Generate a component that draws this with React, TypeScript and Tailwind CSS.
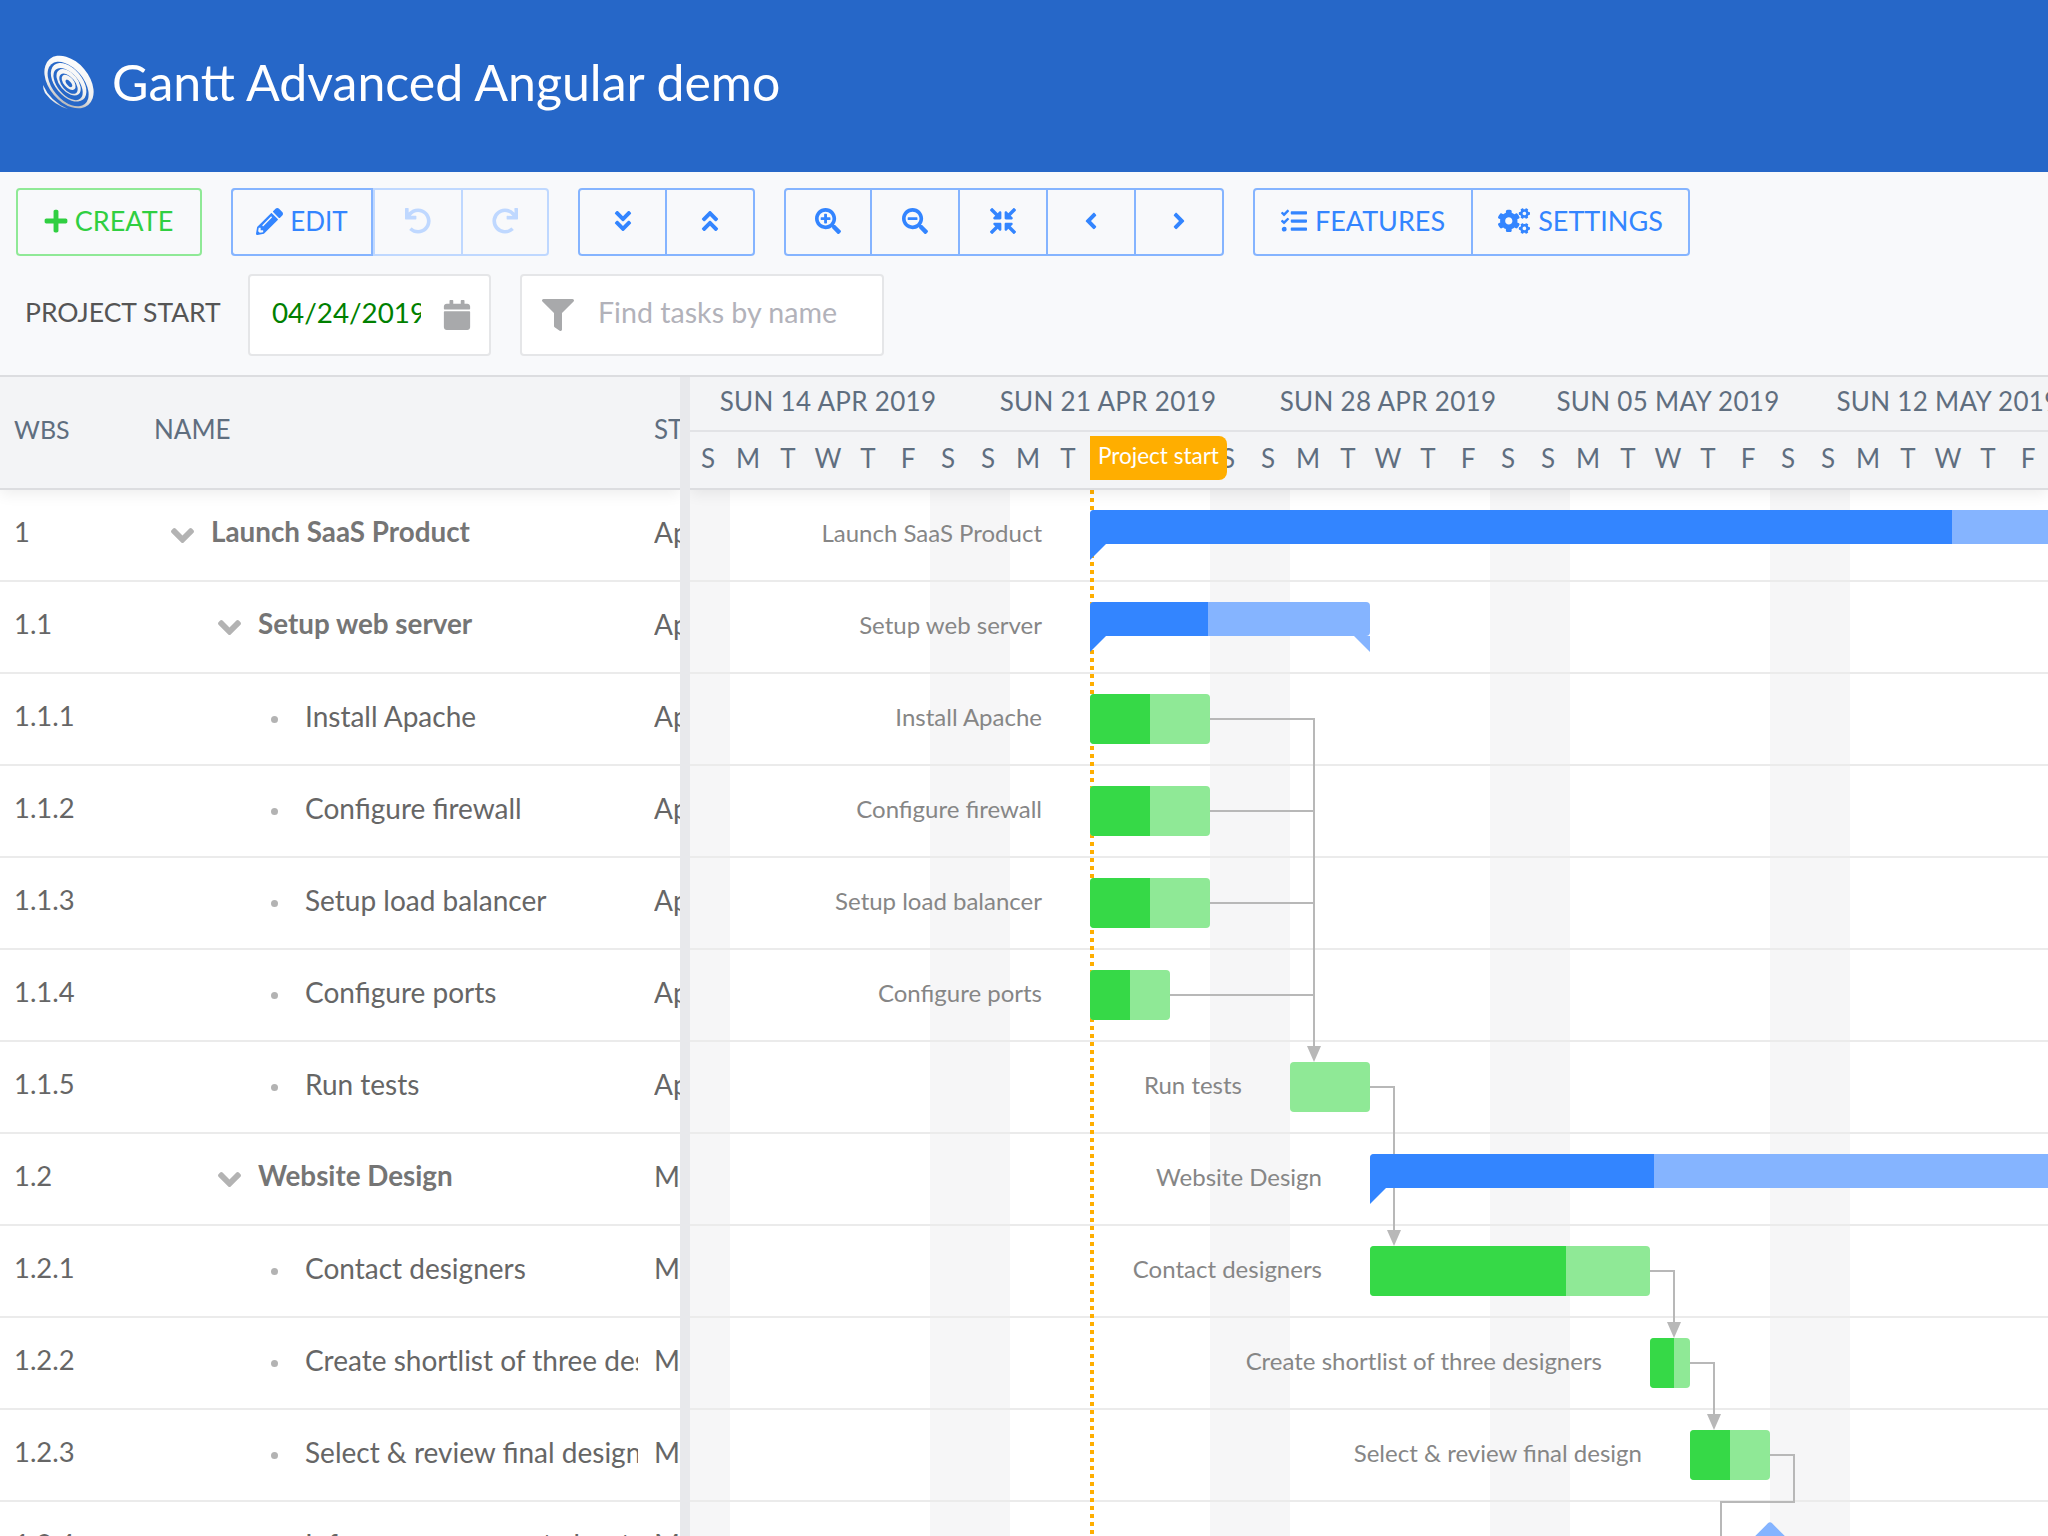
import React from "react";
import {
  FaPlus,
  FaPencilAlt,
  FaUndo,
  FaRedo,
  FaAngleDoubleDown,
  FaAngleDoubleUp,
  FaSearchPlus,
  FaSearchMinus,
  FaCompressArrowsAlt,
  FaAngleLeft,
  FaAngleRight,
  FaTasks,
  FaCogs,
  FaCalendar,
  FaFilter,
  FaAngleDown,
} from "react-icons/fa";

const TIMELINE_LEFT = 690;

const weeks = [
  "SUN 14 APR 2019",
  "SUN 21 APR 2019",
  "SUN 28 APR 2019",
  "SUN 05 MAY 2019",
  "SUN 12 MAY 2019",
];

const days = "SMTWTFSSMTWTFSSMTWTFSSMTWTFSSMTWTFSSMTWTF".split("");

const weekendBands = [690, 930, 1210, 1490, 1770];

type Task = {
  wbs: string;
  name: string;
  level: number;
  parent?: boolean;
  start: string;
  from?: number;
  to?: number;
  done?: number;
};

const tasks: Task[] = [
  { wbs: "1", name: "Launch SaaS Product", level: 0, parent: true, start: "Apr 24, 2019", from: 1090, to: 2100, done: 1952 },
  { wbs: "1.1", name: "Setup web server", level: 1, parent: true, start: "Apr 24, 2019", from: 1090, to: 1370, done: 1208 },
  { wbs: "1.1.1", name: "Install Apache", level: 2, start: "Apr 24, 2019", from: 1090, to: 1210, done: 1150 },
  { wbs: "1.1.2", name: "Configure firewall", level: 2, start: "Apr 24, 2019", from: 1090, to: 1210, done: 1150 },
  { wbs: "1.1.3", name: "Setup load balancer", level: 2, start: "Apr 24, 2019", from: 1090, to: 1210, done: 1150 },
  { wbs: "1.1.4", name: "Configure ports", level: 2, start: "Apr 24, 2019", from: 1090, to: 1170, done: 1130 },
  { wbs: "1.1.5", name: "Run tests", level: 2, start: "Apr 29, 2019", from: 1290, to: 1370, done: 1290 },
  { wbs: "1.2", name: "Website Design", level: 1, parent: true, start: "May 01, 2019", from: 1370, to: 2100, done: 1654 },
  { wbs: "1.2.1", name: "Contact designers", level: 2, start: "May 01, 2019", from: 1370, to: 1650, done: 1566 },
  { wbs: "1.2.2", name: "Create shortlist of three designers", level: 2, start: "May 08, 2019", from: 1650, to: 1690, done: 1674 },
  { wbs: "1.2.3", name: "Select & review final design", level: 2, start: "May 09, 2019", from: 1690, to: 1770, done: 1730 },
  { wbs: "1.2.4", name: "Inform management about decision", level: 2, start: "May 11, 2019" },
];

// dependency lines, relative to the timeline body
const depLines = [
  { d: "M520 229H624V556", arrow: [624, 572] },
  { d: "M520 321H624" },
  { d: "M520 413H624" },
  { d: "M480 505H624" },
  { d: "M680 597H704V740", arrow: [704, 756] },
  { d: "M960 781H984V832", arrow: [984, 848] },
  { d: "M1000 873H1024V924", arrow: [1024, 940] },
  { d: "M1080 965H1104V1012H1031V1060" },
];

function Logo() {
  return (
    <svg viewBox="0 0 54 54" className="w-[54px] h-[54px] shrink-0">
      <defs>
        <linearGradient id="swirl" gradientUnits="userSpaceOnUse" x1="14" y1="4" x2="40" y2="52">
          <stop offset="0" stopColor="#ffffff" />
          <stop offset="0.6" stopColor="#f0f0f0" />
          <stop offset="1" stopColor="#a6a6a6" />
        </linearGradient>
      </defs>
      <path d="M1 30Q8 46 26 54Q12 50 3 38Q1 34 1 30Z" fill="url(#swirl)" />
      <g transform="rotate(50 27 27)">
        <ellipse cx="27" cy="27" rx="30" ry="20" fill="url(#swirl)" />
        <ellipse cx="28" cy="29" rx="26" ry="15.5" fill="#2667c8" />
        <ellipse cx="27" cy="27.5" rx="22.5" ry="13.5" fill="url(#swirl)" />
        <ellipse cx="28" cy="29" rx="19" ry="10.5" fill="#2667c8" />
        <ellipse cx="27" cy="27.5" rx="15.5" ry="9" fill="url(#swirl)" />
        <ellipse cx="28" cy="28.5" rx="12" ry="6.5" fill="#2667c8" />
        <ellipse cx="27" cy="27.5" rx="9" ry="5" fill="url(#swirl)" />
        <ellipse cx="28" cy="28" rx="4.5" ry="2" fill="#2667c8" />
      </g>
    </svg>
  );
}

function ToolButton({
  width,
  disabled,
  children,
}: {
  width: string;
  disabled?: boolean;
  children: React.ReactNode;
}) {
  return (
    <button
      className={`h-full ${width} pb-[2px] flex items-center justify-center gap-[8px] border-l-2 first:border-l-0 ${
        disabled ? "border-[#bfd8ff] text-[#bfd8ff]" : "border-[#85b4ff] text-[#3385ff]"
      }`}
    >
      {children}
    </button>
  );
}

function Group({ children }: { children: React.ReactNode }) {
  return <div className="flex h-[68px] border-2 border-[#85b4ff] rounded-[4px]">{children}</div>;
}

function Toolbar() {
  return (
    <div className="bg-[#f8f9fb] px-4 pt-4 pb-[19px] text-[27px]">
      <div className="flex gap-[29px]">
        <button className="w-[186px] h-[68px] pb-[2px] pr-[2px] flex items-center justify-center gap-[6px] border-2 border-[#8fe996] rounded-[4px] text-[#30cf41]">
          <FaPlus className="text-[26px]" />
          CREATE
        </button>
        <div className="flex h-[68px] border-2 border-[#bfd8ff] rounded-[4px]">
          <button className="w-[138px] h-full -my-[2px] -ml-[2px] box-content border-2 border-[#85b4ff] rounded-l-[4px] flex items-center justify-center gap-[7px] text-[26px] text-[#3385ff]">
            <FaPencilAlt className="text-[27px] -mt-[2px]" />
            <span className="-mt-[2px]">EDIT</span>
          </button>
          <ToolButton width="w-[88px]" disabled>
            <FaUndo className="text-[26px]" />
          </ToolButton>
          <ToolButton width="w-[86px]" disabled>
            <FaRedo className="text-[26px]" />
          </ToolButton>
        </div>
        <Group>
          <ToolButton width="w-[85px]">
            <FaAngleDoubleDown className="text-[26px]" />
          </ToolButton>
          <ToolButton width="w-[88px]">
            <FaAngleDoubleUp className="text-[26px]" />
          </ToolButton>
        </Group>
        <Group>
          <ToolButton width="w-[84px]">
            <FaSearchPlus className="text-[26px]" />
          </ToolButton>
          <ToolButton width="w-[88px]">
            <FaSearchMinus className="text-[26px]" />
          </ToolButton>
          <ToolButton width="w-[88px]">
            <FaCompressArrowsAlt className="text-[26px]" />
          </ToolButton>
          <ToolButton width="w-[88px]">
            <FaAngleLeft className="text-[26px]" />
          </ToolButton>
          <ToolButton width="w-[88px]">
            <FaAngleRight className="text-[26px]" />
          </ToolButton>
        </Group>
        <Group>
          <ToolButton width="w-[216px]">
            <FaTasks className="text-[26px]" />
            FEATURES
          </ToolButton>
          <ToolButton width="w-[217px]">
            <FaCogs className="text-[32px]" />
            SETTINGS
          </ToolButton>
        </Group>
      </div>
      <div className="flex items-center mt-[18px] h-[82px]">
        <span className="ml-[9px] w-[223px] pb-[5px] text-[#555] text-[26.5px]">PROJECT START</span>
        <div className="w-[243px] h-full bg-white border-2 border-[#e5e6e8] rounded-[4px] flex items-center pl-[22px]">
          <span className="w-[149px] pb-[5px] overflow-hidden whitespace-nowrap text-[#008000] text-[27.8px]">04/24/2019</span>
          <FaCalendar className="ml-[21px] text-[#a8a9ab] text-[30px] shrink-0" />
        </div>
        <div className="ml-[29px] w-[364px] h-full bg-white border-2 border-[#e5e6e8] rounded-[4px] flex items-center pl-[20px]">
          <FaFilter className="text-[#a8a9ab] text-[32px] shrink-0" />
          <span className="ml-[24px] pb-[5px] text-[#b2b2ba] text-[28.6px]">Find tasks by name</span>
        </div>
      </div>
    </div>
  );
}

function GridRow({ task }: { task: Task }) {
  const indent = task.level === 0 ? "pl-[18px]" : task.level === 1 ? "pl-[65px]" : "pl-[117px]";
  return (
    <div className="h-[92px] shrink-0 border-b-2 border-[#ebebeb] flex items-center text-[28px] text-[#666] whitespace-nowrap">
      <div className="w-[154px] pl-[14px] pb-[6px] shrink-0 text-[27.4px]">{task.wbs}</div>
      <div className={`w-[484px] shrink-0 overflow-hidden flex items-center ${indent}`}>
        {task.parent ? (
          <FaAngleDown className="text-[#b3b3b3] w-[23px] h-[37px] -ml-[1px] mr-[17px] shrink-0" />
        ) : (
          <span className="w-[7px] h-[7px] rounded-full bg-[#b3b3b3] mr-[27px] shrink-0" />
        )}
        <span className={`pb-[6px] ${task.parent ? "font-bold text-[#757575] text-[27.8px]" : ""}`}>{task.name}</span>
      </div>
      <div className="ml-[16px] pb-[6px] w-[26px] overflow-hidden">{task.start}</div>
    </div>
  );
}

function Bar({ task, index }: { task: Task; index: number }) {
  if (task.from === undefined || task.to === undefined || task.done === undefined) return null;
  const left = task.from - TIMELINE_LEFT;
  const width = task.to - task.from;
  const doneWidth = task.done - task.from;
  const top = index * 92 + 20;
  return (
    <>
      <div
        className="absolute text-[24px] text-[#868686] whitespace-nowrap text-right -translate-x-full leading-[34px]"
        style={{ left: left - 48, top: index * 92 + 26 }}
      >
        {task.name}
      </div>
      <div
        className={`absolute overflow-hidden flex rounded-[4px] ${task.parent ? "h-[34px] bg-[#85b4ff] rounded-bl-none" : "h-[50px] bg-[#8fe996]"}`}
        style={{ left, top, width }}
      >
        <div className={`h-full ${task.parent ? "bg-[#3385ff]" : "bg-[#36d947]"}`} style={{ width: doneWidth }} />
      </div>
      {task.parent && (
        <>
          <div
            className="absolute w-[16px] h-[16px] bg-[#3385ff] [clip-path:polygon(0_0,100%_0,0_100%)]"
            style={{ left, top: top + 34 }}
          />
          <div
            className="absolute w-[16px] h-[16px] bg-[#85b4ff] [clip-path:polygon(0_0,100%_0,100%_100%)]"
            style={{ left: left + width - 16, top: top + 34 }}
          />
        </>
      )}
    </>
  );
}

function Timeline() {
  return (
    <div className="flex-1 min-w-0 flex flex-col overflow-hidden">
      <div className="bg-[#f3f4f6] border-b-2 border-[#dcdde0] text-[#5f6e7f] relative z-10 shadow-[0_4px_14px_rgba(0,0,0,0.07)]">
        <div className="flex h-[55px] border-b-2 border-[#e2e3e6] w-[1400px]">
          {weeks.map((week) => (
            <div key={week} className="w-[280px] shrink-0 pr-[4px] text-center text-[26px] leading-[49px] tracking-[0.3px] whitespace-nowrap">
              {week}
            </div>
          ))}
        </div>
        <div className="flex h-[56px] w-[1640px]">
          {days.map((day, i) => (
            <div key={i} className="w-[40px] shrink-0 pr-[4px] text-center text-[26px] leading-[52px]">
              {day}
            </div>
          ))}
        </div>
        <div className="absolute left-[400px] top-[59px] w-[137px] h-[44px] bg-[#ffae00] rounded-r-[8px] text-white text-[22.5px] leading-[40px] pl-[8px] whitespace-nowrap">
          Project start
        </div>
      </div>
      <div className="relative flex-1 overflow-hidden">
        {weekendBands.map((x) => (
          <div
            key={x}
            className="absolute top-0 bottom-0 bg-[#f6f6f7]"
            style={{ left: x - TIMELINE_LEFT, width: x === 690 ? 40 : 80 }}
          />
        ))}
        {tasks.map((task) => (
          <div key={task.wbs} className="relative h-[92px] border-b-2 border-[#ebebeb]" />
        ))}
        <div className="absolute left-[400px] top-0 bottom-0 w-[4px] bg-[repeating-linear-gradient(to_bottom,#ffae00_0,#ffae00_4px,transparent_4px,transparent_8px)]" />
        <svg className="absolute left-0 top-0 w-[1358px] h-[1046px]" fill="none">
          {depLines.map((line) => (
            <g key={line.d}>
              <path d={line.d} stroke="#b8b8b8" strokeWidth="2" />
              {line.arrow && (
                <polygon
                  points={`${line.arrow[0] - 7},${line.arrow[1] - 16} ${line.arrow[0] + 7},${line.arrow[1] - 16} ${line.arrow[0]},${line.arrow[1]}`}
                  fill="#b8b8b8"
                />
              )}
            </g>
          ))}
        </svg>
        {tasks.map((task, i) => (
          <Bar key={task.wbs} task={task} index={i} />
        ))}
        <div className="absolute left-[1066px] top-[1037px] w-[28px] h-[28px] rotate-45 rounded-[3px] bg-[#85b4ff]" />
      </div>
    </div>
  );
}

export default function App() {
  return (
    <div className="w-[2048px] h-[1536px] overflow-hidden flex flex-col bg-white font-['Lato',sans-serif]">
      <header className="h-[172px] shrink-0 bg-[#2667c8] flex items-center pl-[42px] pb-[8px]">
        <Logo />
        <h1 className="ml-[16px] text-white text-[50px] font-normal">Gantt Advanced Angular demo</h1>
      </header>
      <Toolbar />
      <div className="flex-1 min-h-0 flex border-t-2 border-[#dcdde0]">
        <div className="w-[680px] shrink-0 flex flex-col overflow-hidden">
          <div className="h-[113px] shrink-0 pb-[6px] bg-[#f3f4f6] border-b-2 border-[#dcdde0] flex items-center text-[26px] text-[#5f6e7f] whitespace-nowrap relative z-10 shadow-[0_4px_14px_rgba(0,0,0,0.07)]">
            <div className="w-[154px] pl-[14px] text-[25px]">WBS</div>
            <div className="w-[500px]">NAME</div>
            <div className="w-[26px] overflow-hidden">START</div>
          </div>
          {tasks.map((task) => (
            <GridRow key={task.wbs} task={task} />
          ))}
        </div>
        <div className="w-[10px] shrink-0 bg-[#e8e9ec] z-20" />
        <Timeline />
      </div>
    </div>
  );
}
